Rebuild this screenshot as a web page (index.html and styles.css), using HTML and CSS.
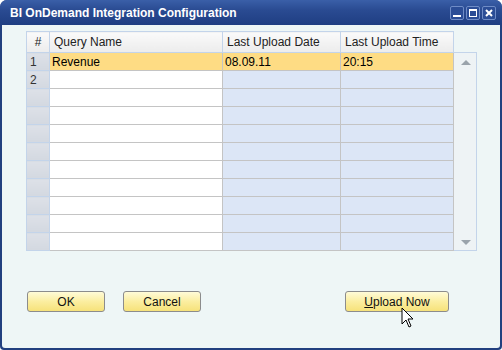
FILE: index.html
```html
<!DOCTYPE html>
<html lang="en">
<head>
<meta charset="UTF-8" />
<title>BI OnDemand Integration Configuration</title>
<link rel="stylesheet" href="styles.css">
</head>
<body>
  <div class="window">
    <div class="titlebar">
      <span class="title">BI OnDemand Integration Configuration</span>
      <div class="win-btns">
        <span class="win-btn"><svg width="10" height="10" viewBox="0 0 10 10"><rect x="1" y="7" width="8" height="2" fill="#fff"/></svg></span>
        <span class="win-btn"><svg width="10" height="10" viewBox="0 0 10 10"><rect x="1.5" y="1.5" width="7" height="7" fill="none" stroke="#fff" stroke-width="1"/><rect x="1" y="1" width="8" height="2" fill="#fff"/></svg></span>
        <span class="win-btn"><svg width="10" height="10" viewBox="0 0 10 10"><path d="M2 2 L8 8 M8 2 L2 8" stroke="#fff" stroke-width="2"/></svg></span>
      </div>
    </div>

    <div class="content">
      <div class="grid-area">
        <table class="grid">
          <thead>
            <tr>
              <th class="num">#</th>
              <th class="c-name">Query Name</th>
              <th class="c-date">Last Upload Date</th>
              <th class="c-time">Last Upload Time</th>
            </tr>
          </thead>
          <tbody>
            <tr class="sel"><td class="num">1</td><td>Revenue</td><td>08.09.11</td><td>20:15</td></tr>
            <tr><td class="num">2</td><td></td><td class="blue"></td><td class="blue"></td></tr>
            <tr><td class="num"></td><td></td><td class="blue"></td><td class="blue"></td></tr>
            <tr><td class="num"></td><td></td><td class="blue"></td><td class="blue"></td></tr>
            <tr><td class="num"></td><td></td><td class="blue"></td><td class="blue"></td></tr>
            <tr><td class="num"></td><td></td><td class="blue"></td><td class="blue"></td></tr>
            <tr><td class="num"></td><td></td><td class="blue"></td><td class="blue"></td></tr>
            <tr><td class="num"></td><td></td><td class="blue"></td><td class="blue"></td></tr>
            <tr><td class="num"></td><td></td><td class="blue"></td><td class="blue"></td></tr>
            <tr><td class="num"></td><td></td><td class="blue"></td><td class="blue"></td></tr>
            <tr><td class="num"></td><td></td><td class="blue"></td><td class="blue"></td></tr>
          </tbody>
        </table>
        <div class="scrollbar">
          <span class="arrow up"></span>
          <span class="arrow down"></span>
        </div>
      </div>

      <div class="buttons">
        <button class="btn btn-ok">OK</button>
        <button class="btn btn-cancel">Cancel</button>
        <button class="btn btn-upload"><u>U</u>pload Now</button>
      </div>

      <!-- ponteiro do mouse -->
      <svg class="cursor" width="14" height="22" viewBox="0 0 14 22">
        <path d="M1 1 L1 17 L5 13 L8 20 L10 19 L7 12 L12 12 Z" fill="#fff" stroke="#000" stroke-width="1" stroke-linejoin="round"/>
      </svg>
    </div>
  </div>
</body>
</html>
```

FILE: styles.css
```css
body {
  margin: 0;
  background: #ffffff;
  font-family: "Liberation Sans", Arial, sans-serif;
  font-size: 12px;
}

/* Janela */
.window {
  width: 502px;
  height: 350px;
  box-sizing: border-box;
  background: #22407f;
  border-radius: 7px 7px 4px 4px;
  display: flex;
  flex-direction: column;
  overflow: hidden;
}

.titlebar {
  height: 25px;
  flex: none;
  display: flex;
  align-items: center;
  justify-content: space-between;
  padding: 0 6px 0 10px;
  background: linear-gradient(#3a5fa8, #2a4b92 40%, #1f3e82);
}

.title {
  color: #ffffff;
  font-weight: bold;
  font-size: 12px;
  padding-top: 1px;
}

.win-btns {
  display: flex;
  gap: 2px;
}

.win-btn {
  width: 12px;
  height: 12px;
  border: 1px solid #6f8cc6;
  border-radius: 2px;
  background: #2b4d96;
  display: flex;
  align-items: center;
  justify-content: center;
}

.content {
  position: relative;
  flex: 1;
  margin: 0 2px 2px 2px;
  background: #eef6f6;
  border-radius: 0 0 3px 3px;
  padding: 6px 0 0 24px;
}

/* Grade */
.grid-area {
  display: flex;
  align-items: flex-start;
}

.grid {
  border-collapse: collapse;
  table-layout: fixed;
  border: 1px solid #c3d4ea;
}

.grid th {
  height: 20px;
  padding: 0 0 0 4px;
  text-align: left;
  font-weight: normal;
  color: #222;
  background: linear-gradient(#fafafa, #ececec);
  border: 1px solid #c3d4ea;
}

.grid th.num {
  width: 22px;
  text-align: center;
  padding: 0;
}

.grid td {
  height: 17px;
  padding: 0 0 0 2px;
  background: #ffffff;
  border: 1px solid #c4c4c4;
  border-top: none;
  color: #000;
}

.grid td.blue {
  background: #dce6f6;
}

.grid td.num {
  width: 19px;
  padding: 0 0 0 3px;
  background: linear-gradient(#dde1e8, #d3d8e0);
  border-color: #c3d4ea;
  color: #333;
}

.c-name { width: 168px; }
.c-date { width: 113px; }
.c-time { width: 108px; }

.grid tr.sel td {
  background: #fedc84;
}

.grid tr.sel td.num {
  background: linear-gradient(#dde1e8, #d3d8e0);
}

.scrollbar {
  position: relative;
  margin-top: 21px;
  width: 22px;
  height: 197px;
  background: #eef3f5;
  border: 1px solid #c3d4ea;
  border-left: none;
}

.arrow {
  position: absolute;
  left: 7px;
  width: 0;
  height: 0;
  border-left: 5px solid transparent;
  border-right: 5px solid transparent;
}

.arrow.up {
  top: 7px;
  border-bottom: 5px solid #9aa3ab;
}

.arrow.down {
  bottom: 5px;
  border-top: 5px solid #9aa3ab;
}

/* Botões */
.buttons {
  display: flex;
  margin-top: 40px;
  padding-left: 1px;
}

.btn {
  height: 21px;
  padding: 0;
  font-family: "Liberation Sans", Arial, sans-serif;
  font-size: 12px;
  color: #111;
  border: 1px solid #8c8c8c;
  border-radius: 3px;
  background: linear-gradient(#fffbd8, #fbeea0 50%, #f6e27a);
}

.btn-ok { width: 78px; }
.btn-cancel { width: 78px; margin-left: 18px; }
.btn-upload { width: 104px; margin-left: 144px; }

.cursor {
  position: absolute;
  left: 399px;
  top: 282px;
}
```
